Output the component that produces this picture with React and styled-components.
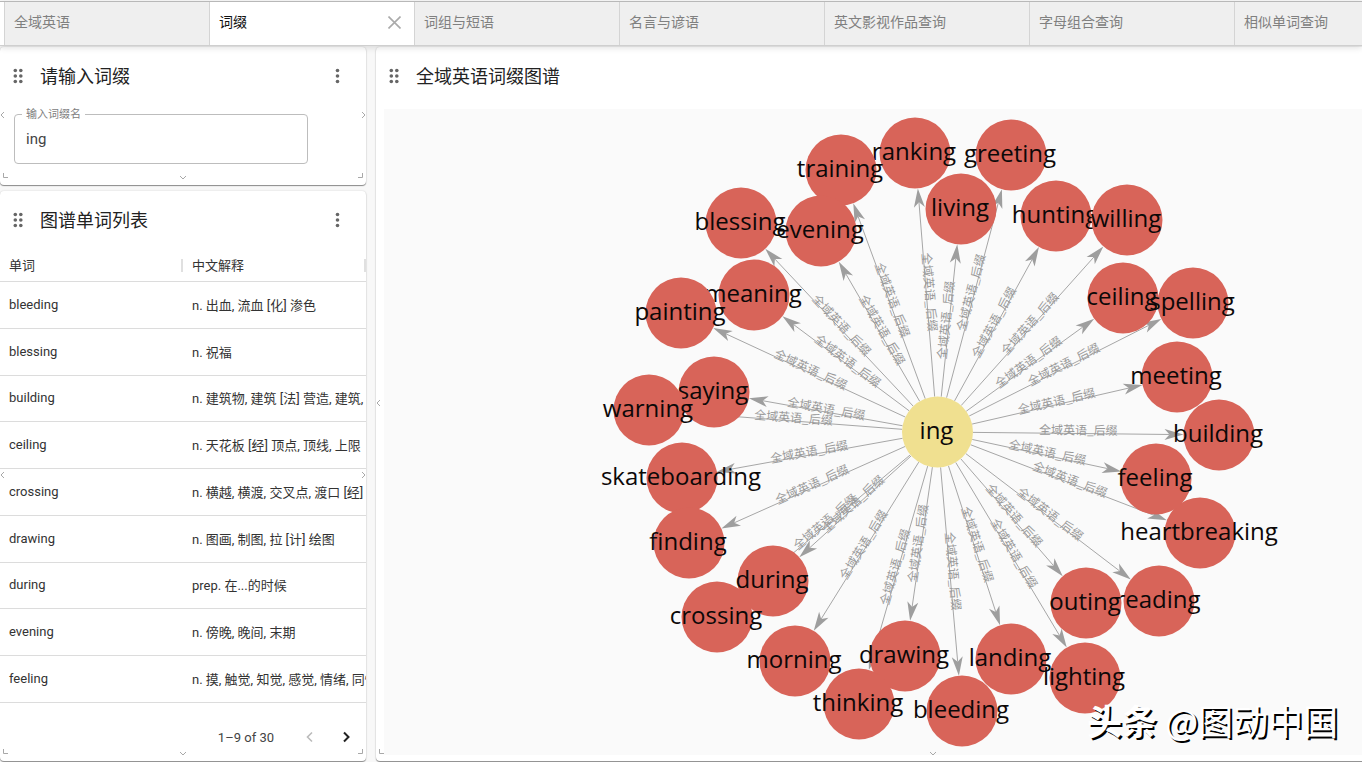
import React from 'react'
import styled, { createGlobalStyle } from 'styled-components'

const GlobalStyle = createGlobalStyle`
  * {
    box-sizing: border-box;
  }
  body {
    margin: 0;
    background: #f8f8f8;
    color: #333;
    font-family: Roboto, "Noto Sans CJK SC", sans-serif;
    font-size: 13px;
  }
`

const Page = styled.div`
  position: relative;
  display: flex;
  flex-direction: column;
  height: 100vh;
  min-height: 600px;
  overflow: hidden;
`

const TabBar = styled.nav`
  position: relative;
  z-index: 1;
  display: flex;
  flex-shrink: 0;
  height: 45px;
  margin-top: 1px;
  padding-left: 4px;
  overflow: hidden;
  border-top: 1px solid #b8b8b8;
  border-bottom: 1px solid #cfcfcf;
  background: #fff;
  box-shadow: 0 2px 6px rgba(0, 0, 0, 0.12);
`

const Tab = styled.div`
  display: flex;
  flex: 0 0 205px;
  align-items: center;
  justify-content: space-between;
  padding: 0 13px 3px 9px;
  border-left: 1px solid #d4d4d4;
  background: ${props => props.$active ? '#fff' : '#efefef'};
`

const TabLabel = styled.button`
  padding: 0;
  border: 0;
  background: none;
  color: ${props => props.$active ? '#111' : '#808080'};
  font: inherit;
  font-size: 14px;
  line-height: 20px;
`

const IconButton = styled.button`
  display: flex;
  align-items: center;
  justify-content: center;
  padding: 0;
  border: 0;
  background: none;
  color: ${props => props.$color || '#666'};
`

const Main = styled.main`
  display: grid;
  flex: 1;
  grid-template-columns: 366px minmax(0, 1fr);
  gap: 10px;
  min-height: 0;
  padding: 1px 0;
`

const SideColumn = styled.div`
  display: flex;
  flex-direction: column;
  gap: 6px;
  min-height: 0;
`

const Card = styled.section`
  position: relative;
  display: flex;
  flex: ${props => props.$fill ? '1 1 0' : '0 0 auto'};
  flex-direction: column;
  min-width: 0;
  min-height: 0;
  margin-right: ${props => props.$bleed ? '-128px' : '0'};
  border-radius: 4px;
  background: #fff;
  box-shadow: 0 1px 1px rgba(0, 0, 0, 0.42), 0 0 2px rgba(0, 0, 0, 0.16);
`

const CardHeader = styled.header`
  display: flex;
  flex-shrink: 0;
  align-items: center;
  gap: 17px;
  height: 58px;
  padding: 0 26px 0 13px;
`

const CardTitle = styled.h2`
  flex: 1;
  margin: 0;
  padding-top: 2px;
  color: #222;
  font-size: 18px;
  font-weight: 400;
  line-height: 24px;
`

const FieldArea = styled.div`
  padding: 0 58px 21px 14px;
`

const Field = styled.fieldset`
  margin: 0;
  padding: 0 11px;
  border: 1px solid #bdbdbd;
  border-radius: 4px;
`

const FieldLegend = styled.legend`
  height: 18px;
  margin-left: -4px;
  padding: 0 4px;
  color: #808080;
  font-size: 11px;
  line-height: 20px;
`

const FieldInput = styled.input`
  display: block;
  width: 100%;
  height: 40px;
  padding: 0 0 8px;
  border: 0;
  outline: 0;
  background: none;
  color: #444;
  font: inherit;
  font-size: 15px;
`

const TableWrap = styled.div`
  flex: 1;
  min-height: 0;
  overflow: hidden;
`

const WordTable = styled.table`
  width: 100%;
  height: 100%;
  border-collapse: separate;
  border-spacing: 0;
  table-layout: fixed;
`

const HeadCell = styled.th`
  height: 33px;
  padding: 0;
  border-bottom: 1px solid #dcdcdc;
  font-weight: 400;
  text-align: left;
`

const HeadLabel = styled.span`
  display: block;
  padding-left: 9px;
  border-right: 2px solid #e0e0e0;
  line-height: 13px;
`

const Cell = styled.td`
  padding: 0 0 1px 9px;
  overflow: hidden;
  border-bottom: 1px solid #dcdcdc;
  white-space: nowrap;
`

const TableFooter = styled.footer`
  display: flex;
  flex-shrink: 0;
  align-items: center;
  justify-content: flex-end;
  height: 58px;
  padding: 10px 12px 0 0;
`

const PageCount = styled.span`
  margin-right: 28px;
  color: #444;
`

const Pager = styled.div`
  display: flex;
  gap: 20px;
`

const Canvas = styled.div`
  flex: 1;
  min-height: 0;
  margin: 4px 0 6px 8px;
  overflow: hidden;
  background: #fafafa;
`

const Graph = styled.svg`
  display: block;
  width: 100%;
  height: 100%;
`

const EdgeLine = styled.line`
  stroke: #a6a6a6;
  stroke-width: 1px;
`

const EdgeLabel = styled.text`
  fill: #999;
  font-family: "Noto Sans CJK SC", sans-serif;
  font-size: 12px;
  text-anchor: middle;
`

const NodeLabel = styled.text`
  fill: #0c0808;
  font-family: "Open Sans", "Noto Sans", sans-serif;
  font-size: 24px;
  text-anchor: middle;
`

const Watermark = styled.div`
  position: absolute;
  right: 24px;
  bottom: 18px;
  color: #fff;
  font-family: "Noto Sans CJK SC", sans-serif;
  font-size: 35px;
  line-height: 48px;
  text-shadow: 2px 2px 0 #000;
  white-space: nowrap;
`

const handlePlaces = {
  left: 'left: 0; top: calc(50% - 5px);',
  right: 'right: 0; top: calc(50% - 5px);',
  bottom: 'left: calc(50% - 4px); bottom: 3px;',
  bottomLeft: 'left: 2px; bottom: 6px;',
  bottomRight: 'right: 2px; bottom: 6px;'
}

const HandleIcon = styled.svg`
  position: absolute;
  width: 8px;
  height: 8px;
  fill: none;
  stroke: #a8a8a8;
  ${props => handlePlaces[props.$place]}
`

const handlePaths = {
  left: 'M4 1L1 4L4 7',
  right: 'M4 1L7 4L4 7',
  bottom: 'M1 2L4 5L7 2',
  bottomLeft: 'M1.5 2V6.5H6',
  bottomRight: 'M6.5 2V6.5H2'
}

const allHandles = ['left', 'right', 'bottom', 'bottomLeft', 'bottomRight']

const tabs = ['全域英语', '词缀', '词组与短语', '名言与谚语', '英文影视作品查询', '字母组合查询', '相似单词查询']

const words = [
  ['bleeding', 'n. 出血, 流血 [化] 渗色'],
  ['blessing', 'n. 祝福'],
  ['building', 'n. 建筑物, 建筑 [法] 营造, 建筑, 建造'],
  ['ceiling', 'n. 天花板 [经] 顶点, 顶线, 上限'],
  ['crossing', 'n. 横越, 横渡, 交叉点, 渡口 [经] 划线'],
  ['drawing', 'n. 图画, 制图, 拉 [计] 绘图'],
  ['during', 'prep. 在...的时候'],
  ['evening', 'n. 傍晚, 晚间, 末期'],
  ['feeling', 'n. 摸, 触觉, 知觉, 感觉, 情绪, 同情']
]

const RADIUS = 35.5
const root = { word: 'ing', x: 553.5, y: 323 }

// later nodes are painted over earlier ones
const nodes = [
  { word: 'ranking', x: 531, y: 44 },
  { word: 'living', x: 577, y: 100 },
  { word: 'greeting', x: 627, y: 46 },
  { word: 'training', x: 457, y: 61 },
  { word: 'evening', x: 437, y: 122 },
  { word: 'blessing', x: 357, y: 114 },
  { word: 'meaning', x: 370, y: 186 },
  { word: 'painting', x: 297, y: 204 },
  { word: 'saying', x: 330, y: 283 },
  { word: 'warning', x: 265, y: 301 },
  { word: 'skateboarding', x: 298, y: 369 },
  { word: 'finding', x: 305, y: 434 },
  { word: 'during', x: 389, y: 472 },
  { word: 'crossing', x: 333, y: 508 },
  { word: 'morning', x: 411, y: 552 },
  { word: 'drawing', x: 521, y: 547 },
  { word: 'thinking', x: 475, y: 595 },
  { word: 'bleeding', x: 578, y: 602 },
  { word: 'lighting', x: 701, y: 569 },
  { word: 'landing', x: 627, y: 550 },
  { word: 'reading', x: 775, y: 492 },
  { word: 'outing', x: 702, y: 494 },
  { word: 'heartbreaking', x: 816, y: 424 },
  { word: 'feeling', x: 772, y: 370 },
  { word: 'building', x: 835, y: 326 },
  { word: 'meeting', x: 793, y: 268 },
  { word: 'ceiling', x: 739, y: 189 },
  { word: 'spelling', x: 809, y: 194 },
  { word: 'hunting', x: 672, y: 107 },
  { word: 'willing', x: 743, y: 111 }
]

function Handle ({ place }) {
  return (
    <HandleIcon $place={place} viewBox="0 0 8 8" aria-hidden="true">
      <path d={handlePaths[place]} />
    </HandleIcon>
  )
}

function Dots ({ columns }) {
  const width = columns * 5
  return (
    <svg width={width} height="16" fill="#666" aria-hidden="true">
      {Array.from({ length: columns }, (_, c) => [2.5, 8, 13.5].map(y => (
        <circle key={c + '-' + y} cx={2.5 + c * 5.5 - (columns - 1) * 0.2} cy={y} r="1.8" />
      )))}
    </svg>
  )
}

function Panel ({ title, menu, fill, bleed, children }) {
  return (
    <Card $fill={fill} $bleed={bleed}>
      <CardHeader>
        <Dots columns={2} />
        <CardTitle>{title}</CardTitle>
        {menu && <IconButton aria-label="更多"><Dots columns={1} /></IconButton>}
      </CardHeader>
      {children}
      {allHandles.map(place => <Handle key={place} place={place} />)}
    </Card>
  )
}

function Edge ({ node }) {
  const angle = Math.atan2(node.y - root.y, node.x - root.x)
  const cos = Math.cos(angle)
  const sin = Math.sin(angle)
  const x1 = root.x + cos * RADIUS
  const y1 = root.y + sin * RADIUS
  const x2 = node.x - cos * RADIUS
  const y2 = node.y - sin * RADIUS
  const degrees = angle * 180 / Math.PI
  // keep the label readable on the left half
  const turn = cos < 0 ? degrees + 180 : degrees
  return (
    <g>
      <EdgeLine x1={x1} y1={y1} x2={x2 - cos * 14} y2={y2 - sin * 14} />
      <path
        d="M0 0L-19 -5.5L-14 0L-19 5.5Z"
        fill="#9e9e9e"
        transform={`translate(${x2} ${y2}) rotate(${degrees})`}
      />
      <EdgeLabel y="1" transform={`translate(${(x1 + x2) / 2} ${(y1 + y2) / 2}) rotate(${turn})`}>
        全域英语_后缀
      </EdgeLabel>
    </g>
  )
}

function Node ({ node, color }) {
  return (
    <g>
      <circle cx={node.x} cy={node.y} r={RADIUS} fill={color} />
      <NodeLabel x={node.x - 1} y={node.y + 7}>{node.word}</NodeLabel>
    </g>
  )
}

function App () {
  return (
    <Page>
      <GlobalStyle />
      <TabBar>
        {tabs.map(name => {
          const active = name === '词缀'
          return (
            <Tab key={name} $active={active}>
              <TabLabel $active={active}>{name}</TabLabel>
              {active && (
                <IconButton $color="#aaa" aria-label="关闭">
                  <svg width="13" height="13" stroke="currentColor" strokeWidth="1.6">
                    <path d="M0.5 0.5L12.5 12.5M12.5 0.5L0.5 12.5" />
                  </svg>
                </IconButton>
              )}
            </Tab>
          )
        })}
      </TabBar>
      <Main>
        <SideColumn>
          <Panel title="请输入词缀" menu>
            <FieldArea>
              <Field>
                <FieldLegend><label htmlFor="affix">输入词缀名</label></FieldLegend>
                <FieldInput id="affix" type="text" defaultValue="ing" />
              </Field>
            </FieldArea>
          </Panel>
          <Panel title="图谱单词列表" menu fill>
            <TableWrap>
              <WordTable>
                <thead>
                  <tr>
                    <HeadCell><HeadLabel>单词</HeadLabel></HeadCell>
                    <HeadCell><HeadLabel>中文解释</HeadLabel></HeadCell>
                  </tr>
                </thead>
                <tbody>
                  {words.map(([word, meaning]) => (
                    <tr key={word}>
                      <Cell>{word}</Cell>
                      <Cell>{meaning}</Cell>
                    </tr>
                  ))}
                </tbody>
              </WordTable>
            </TableWrap>
            <TableFooter>
              <PageCount>1–9 of 30</PageCount>
              <Pager>
                <IconButton $color="#bbb" aria-label="上一页" disabled>
                  <svg width="16" height="16" fill="none" stroke="currentColor" strokeWidth="1.6">
                    <path d="M10 3.5L5.5 8L10 12.5" />
                  </svg>
                </IconButton>
                <IconButton $color="#222" aria-label="下一页">
                  <svg width="16" height="16" fill="none" stroke="currentColor" strokeWidth="2">
                    <path d="M6 3.5L10.5 8L6 12.5" />
                  </svg>
                </IconButton>
              </Pager>
            </TableFooter>
          </Panel>
        </SideColumn>
        <Panel title="全域英语词缀图谱" fill bleed>
          <Canvas>
            <Graph>
              {nodes.map(node => <Edge key={node.word} node={node} />)}
              {nodes.map(node => <Node key={node.word} node={node} color="#d86459" />)}
              <Node node={root} color="#f0e090" />
            </Graph>
          </Canvas>
        </Panel>
      </Main>
      <Watermark><b>头条</b> @图动中国</Watermark>
    </Page>
  )
}

export default App
